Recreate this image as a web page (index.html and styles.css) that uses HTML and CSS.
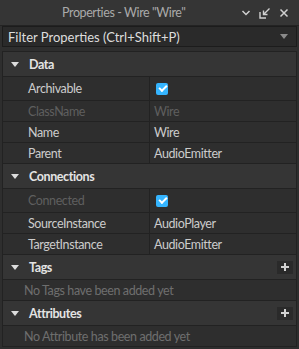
FILE: index.html
```html
<!DOCTYPE html>
<html>
<head>
<meta charset="utf-8">
<link rel="stylesheet" href="styles.css">
</head>
<body>
<div class="panel">
  <div class="titlebar">
    <div class="title">Properties - Wire "Wire"</div>
    <div class="tb-icons">
      <svg width="10" height="8" viewBox="0 0 10 8"><path d="M1.5 2 L5 5.5 L8.5 2" fill="none" stroke="#d0d0d0" stroke-width="1.5"/></svg>
      <svg width="12" height="12" viewBox="0 0 12 12"><path d="M1 5 V11 H7" fill="none" stroke="#d0d0d0" stroke-width="1.4"/><path d="M10.5 1.5 L4.5 7.5 M4.5 3.5 V7.5 H8.5" fill="none" stroke="#d0d0d0" stroke-width="1.4"/></svg>
      <svg width="10" height="10" viewBox="0 0 10 10"><path d="M1.5 1.5 L8.5 8.5 M8.5 1.5 L1.5 8.5" fill="none" stroke="#d0d0d0" stroke-width="1.5"/></svg>
    </div>
  </div>
  <div class="filter">
    <span>Filter Properties (Ctrl+Shift+P)</span>
    <svg width="8" height="5" viewBox="0 0 8 5"><path d="M0 0 H8 L4 5 Z" fill="#8a8a8a"/></svg>
  </div>
  <div class="sections">
    <div class="section">
      <div class="header"><span class="tri"></span><span class="htext">Data</span></div>
      <div class="row tall"><div class="name">Archivable</div><div class="val"><span class="check"></span></div></div>
      <div class="row"><div class="name dis">ClassName</div><div class="val dis">Wire</div></div>
      <div class="row"><div class="name">Name</div><div class="val">Wire</div></div>
      <div class="row"><div class="name">Parent</div><div class="val">AudioEmitter</div></div>
    </div>
    <div class="section">
      <div class="header"><span class="tri"></span><span class="htext">Connections</span></div>
      <div class="row tall"><div class="name dis">Connected</div><div class="val"><span class="check"></span></div></div>
      <div class="row"><div class="name">SourceInstance</div><div class="val">AudioPlayer</div></div>
      <div class="row"><div class="name">TargetInstance</div><div class="val">AudioEmitter</div></div>
    </div>
    <div class="section">
      <div class="header"><span class="tri"></span><span class="htext">Tags</span><span class="plus"></span></div>
      <div class="row empty"><div class="name dis">No Tags have been added yet</div></div>
    </div>
    <div class="section">
      <div class="header"><span class="tri"></span><span class="htext">Attributes</span><span class="plus"></span></div>
      <div class="row empty last"><div class="name dis">No Attribute has been added yet</div></div>
    </div>
  </div>
</div>
</body>
</html>
```
FILE: styles.css
```css
html, body {
  margin: 0;
  padding: 0;
  background: #2e2e2e;
}
body {
  font-family: Lato, "Open Sans", sans-serif;
  font-size: 12.5px;
  letter-spacing: -0.4px;
  color: #cccccc;
  width: 299px;
  height: 349px;
  overflow: hidden;
}
.panel {
  display: flex;
  flex-direction: column;
}
.titlebar {
  height: 25px;
  display: flex;
  align-items: center;
  background: #353535;
  border-bottom: 1px solid #232323;
}
.title {
  flex: 1;
  padding-left: 62px;
  color: #aaaaaa;
}
.tb-icons {
  display: flex;
  align-items: center;
  gap: 8px;
  padding-right: 10px;
}
.filter {
  margin: 0 2px;
  height: 19px;
  border: 1px solid #1c1c1c;
  background: #2a2a2a;
  display: flex;
  align-items: center;
  justify-content: space-between;
  padding: 0 8px 0 5px;
  color: #dddddd;
  font-size: 13px;
  letter-spacing: 0;
}
.sections {
  margin: 4px 2px 0 2px;
  border-left: 1px solid #222222;
  border-right: 1px solid #222222;
}
.header {
  height: 24px;
  background: #353535;
  border-top: 1px solid #222222;
  display: flex;
  align-items: center;
}
.tri {
  width: 0;
  height: 0;
  border-left: 4px solid transparent;
  border-right: 4px solid transparent;
  border-top: 5px solid #dddddd;
  margin-left: 8px;
  margin-right: 10px;
}
.htext {
  font-weight: bold;
  color: #e4e4e4;
  flex: 1;
}
.plus {
  width: 16px;
  height: 13px;
  background: #2a2a2a;
  margin-right: 3px;
  position: relative;
}
.plus::before, .plus::after {
  content: "";
  position: absolute;
  background: #d0d0d0;
}
.plus::before { left: 4px; top: 5px; width: 8px; height: 2px; }
.plus::after { left: 7px; top: 2px; width: 2px; height: 8px; }
.row {
  height: 20px;
  display: flex;
  border-top: 1px solid #222222;
  background: #2e2e2e;
}
.row.tall { height: 23px; }
.row.last { border-bottom: 1px solid #222222; }
.row .name {
  width: 121px;
  padding-left: 25px;
  display: flex;
  align-items: center;
  border-right: 1px solid #222222;
}
.row .val {
  flex: 1;
  padding-left: 4px;
  display: flex;
  align-items: center;
}
.row.empty .name {
  border-right: none;
  width: auto;
  flex: 1;
  padding-left: 21px;
}
.dis { color: #5f5f5f; }
.row.empty .dis { color: #6e6e6e; }
.check {
  width: 12px;
  height: 12px;
  border-radius: 2px;
  background: #35b5ff;
  margin-left: 2px;
  position: relative;
}
.check::after {
  content: "";
  position: absolute;
  left: 3px;
  top: 2px;
  width: 6px;
  height: 3px;
  border-left: 2px solid #ffffff;
  border-bottom: 2px solid #ffffff;
  transform: rotate(-45deg);
}
```
